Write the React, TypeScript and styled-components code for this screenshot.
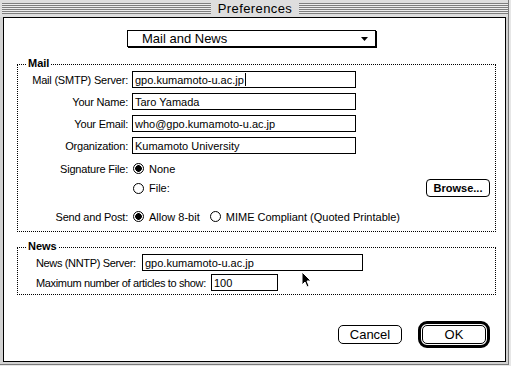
import React from 'react'
import styled, { createGlobalStyle } from 'styled-components'

type Field = {
    label: string
    value: string
    caret?: boolean
}

const mailFields: Field[] = [
    { label: 'Mail (SMTP) Server:', value: 'gpo.kumamoto-u.ac.jp', caret: true },
    { label: 'Your Name:', value: 'Taro Yamada' },
    { label: 'Your Email:', value: 'who@gpo.kumamoto-u.ac.jp' },
    { label: 'Organization:', value: 'Kumamoto University' },
]

export default function App() {
    return (
        <>
            <GlobalStyle />
            <Window>
                <TitleBar>
                    <Stripes />
                    <Title>Preferences</Title>
                    <Stripes />
                </TitleBar>

                <Panel>
                    <Popup>
                        <span>Mail and News</span>
                        <svg width="7" height="4" viewBox="0 0 7 4">
                            <polygon points="0,0 7,0 3.5,4" fill="#000" />
                        </svg>
                    </Popup>

                    <Group $top={17} $padTop={6} $padBottom={6}>
                        <Legend>Mail</Legend>
                        {mailFields.map((f, i) => (
                            <Row key={f.label} $gap={i === 0 ? 0 : 5}>
                                <Label>{f.label}</Label>
                                <TextBox $w={224}>
                                    {f.value}
                                    {f.caret && <Caret />}
                                </TextBox>
                            </Row>
                        ))}
                        <Row $gap={6}>
                            <Label>Signature File:</Label>
                            <Options>
                                <Option>
                                    <Radio $checked />
                                    None
                                </Option>
                            </Options>
                        </Row>
                        <Row $gap={2}>
                            <span />
                            <Options>
                                <Option>
                                    <Radio />
                                    File:
                                </Option>
                                <SmallButton>Browse...</SmallButton>
                            </Options>
                        </Row>
                        <Row $gap={12}>
                            <Label>Send and Post:</Label>
                            <Options>
                                <Option>
                                    <Radio $checked />
                                    Allow 8-bit
                                </Option>
                                <Option>
                                    <Radio />
                                    MIME Compliant (Quoted Printable)
                                </Option>
                            </Options>
                        </Row>
                    </Group>

                    <Group $top={15} $padTop={6} $padBottom={3}>
                        <Legend>News</Legend>
                        <NewsRow $gap={0}>
                            <NewsLabel $w={106}>News (NNTP) Server:</NewsLabel>
                            <TextBox $w={221}>gpo.kumamoto-u.ac.jp</TextBox>
                        </NewsRow>
                        <NewsRow $gap={3}>
                            <NewsLabel $w={175}>Maximum number of articles to show:</NewsLabel>
                            <TextBox $w={67}>100</TextBox>
                        </NewsRow>
                    </Group>

                    <Buttons>
                        <PushButton>Cancel</PushButton>
                        <DefaultRing>
                            <PushButton>OK</PushButton>
                        </DefaultRing>
                    </Buttons>

                    <Pointer width="11" height="17" viewBox="0 0 11 17">
                        <path d="M1 1 L1 14 L4 11 L6 16 L8 15 L6 10 L10 10 Z" fill="#000" stroke="#fff" strokeWidth="1" />
                    </Pointer>
                </Panel>
            </Window>
        </>
    )
}

const GlobalStyle = createGlobalStyle`
    html, body {
        margin: 0;
        padding: 0;
        background: #e6e6e6;
    }
    body {
        font-family: 'Liberation Sans', Arial, sans-serif;
        color: #000;
    }
`

const Window = styled.div`
    position: relative;
    width: 508px;
    height: 364px;
    background: #d2d2d2;
    border-right: 1px solid #7a7a7a;
    border-bottom: 1px solid #7a7a7a;
    display: flex;
    flex-direction: column;
`

const TitleBar = styled.div`
    height: 17px;
    display: flex;
    align-items: flex-start;
    padding-left: 2px;
    background: #dedede;
`

const Stripes = styled.div`
    flex: 1;
    height: 11px;
    margin-top: 3px;
    background: repeating-linear-gradient(to bottom, #7e7e7e 0 1px, #ececec 1px 2px);
`

const Title = styled.div`
    padding: 0 7px;
    font-size: 13px;
    line-height: 17px;
    letter-spacing: 0.4px;
`

const Panel = styled.div`
    position: relative;
    flex: 1;
    margin: 0 2px 2px 3px;
    border: 1px solid #000;
    background: #fff;
    display: flex;
    flex-direction: column;
`

const Popup = styled.div`
    box-sizing: border-box;
    width: 249px;
    height: 17px;
    margin: 12px 0 0 123px;
    padding: 0 7px 0 14px;
    border: 1px solid #000;
    box-shadow: 1px 1px 0 #000;
    display: flex;
    align-items: center;
    justify-content: space-between;
    font-size: 13px;
`

const Group = styled.div<{ $top: number; $padTop: number; $padBottom: number }>`
    position: relative;
    margin: ${(p) => p.$top}px 9px 0 13px;
    padding: ${(p) => p.$padTop}px 5px ${(p) => p.$padBottom}px 0;
    border: 1px dotted #000;
    font-size: 11px;
`

const Legend = styled.div`
    position: absolute;
    top: -8px;
    left: 9px;
    padding: 0 1px;
    background: #fff;
    font-size: 11px;
    font-weight: bold;
    line-height: 13px;
`

const Row = styled.div<{ $gap: number }>`
    display: grid;
    grid-template-columns: 110px 1fr;
    column-gap: 4px;
    align-items: center;
    height: 17px;
    margin-top: ${(p) => p.$gap}px;
`

const Label = styled.div`
    text-align: right;
    white-space: nowrap;
    letter-spacing: -0.2px;
`

const TextBox = styled.div<{ $w: number }>`
    box-sizing: border-box;
    flex: none;
    width: ${(p) => p.$w}px;
    height: 17px;
    padding: 0 2px;
    border: 1px solid #000;
    display: flex;
    align-items: center;
    white-space: nowrap;
    font-size: 11px;
`

const Caret = styled.span`
    display: inline-block;
    width: 1px;
    height: 13px;
    margin-left: 1px;
    background: #000;
`

const Options = styled.div`
    display: flex;
    align-items: center;
    gap: 10px;
    padding-left: 1px;
`

const Option = styled.div`
    display: flex;
    align-items: center;
    gap: 5px;
    white-space: nowrap;
`

const Radio = styled.span<{ $checked?: boolean }>`
    box-sizing: border-box;
    width: 11px;
    height: 11px;
    border: 1px solid #000;
    border-radius: 50%;
    background: ${(p) => (p.$checked ? 'radial-gradient(circle, #000 0 3px, #fff 3.6px)' : '#fff')};
`

const SmallButton = styled.div`
    box-sizing: border-box;
    margin-left: auto;
    width: 64px;
    height: 18px;
    border: 1px solid #000;
    border-radius: 4px;
    display: flex;
    align-items: center;
    justify-content: center;
    font-weight: bold;
    font-size: 11px;
`

const NewsRow = styled.div<{ $gap: number }>`
    display: flex;
    align-items: center;
    height: 17px;
    margin-top: ${(p) => p.$gap}px;
    padding-left: 18px;
`

const NewsLabel = styled.div<{ $w: number }>`
    flex: none;
    width: ${(p) => p.$w}px;
    white-space: nowrap;
    letter-spacing: -0.35px;
`

const Buttons = styled.div`
    margin-top: auto;
    padding: 0 15px 13px 0;
    display: flex;
    justify-content: flex-end;
    align-items: center;
    gap: 16px;
`

const PushButton = styled.div`
    box-sizing: border-box;
    width: 64px;
    height: 19px;
    border: 1px solid #000;
    border-radius: 5px;
    display: flex;
    align-items: center;
    justify-content: center;
    font-size: 13px;
    background: #fff;
`

const DefaultRing = styled.div`
    padding: 1px;
    border: 3px solid #000;
    border-radius: 9px;
`

const Pointer = styled.svg`
    position: absolute;
    left: 297px;
    top: 253px;
`
